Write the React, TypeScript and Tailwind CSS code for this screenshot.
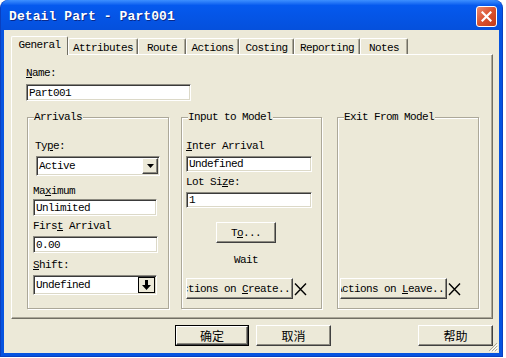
import type React from "react";

const txt = "font-['Liberation_Mono',monospace] text-[11px] tracking-[-0.6px] leading-[12px] text-black whitespace-nowrap";
const cjk = "font-['Noto_Sans_CJK_SC','Noto_Sans',sans-serif] text-[12px] leading-[14px] text-black";

// classic 3D borders
const sunken =
  "bg-white border border-t-[#8c8a80] border-l-[#8c8a80] border-b-white border-r-white shadow-[inset_1px_1px_0_#3a3a3a,inset_-1px_-1px_0_#dcd9c8]";
const raised =
  "bg-[#ece9d8] border border-t-white border-l-white border-b-[#404040] border-r-[#404040] shadow-[inset_-1px_-1px_0_#8c8a80]";
const etched =
  "border border-[#aca899] shadow-[inset_1px_1px_0_#ffffff,1px_1px_0_#ffffff]";

const tabs = [
  { name: "General", w: 57 },
  { name: "Attributes", w: 70 },
  { name: "Route", w: 48 },
  { name: "Actions", w: 53 },
  { name: "Costing", w: 55 },
  { name: "Reporting", w: 66 },
  { name: "Notes", w: 48 },
];

function Label({ children, className = "" }: { children: React.ReactNode; className?: string }) {
  return <div className={`${txt} h-[12px] ${className}`}>{children}</div>;
}

function Field({ value, className = "" }: { value: string; className?: string }) {
  return (
    <div className={`${sunken} flex items-center pl-[2px] ${className}`}>
      <span className={txt}>{value}</span>
    </div>
  );
}

function Group({ title, className = "", children }: { title: string; className?: string; children?: React.ReactNode }) {
  return (
    <div className={`relative ${etched} flex flex-col ${className}`}>
      <span className={`${txt} absolute -top-[7px] left-[6px] bg-[#ece9d8] pr-[1px]`}>{title}</span>
      {children}
    </div>
  );
}

function CrossMark() {
  return (
    <svg width="13" height="14" viewBox="0 0 13 14" className="ml-[1px]">
      <path d="M1 1.5 L12 13 M12 1.5 L1 13" stroke="#000" strokeWidth="1.4" fill="none" />
    </svg>
  );
}

export default function App() {
  return (
    <div className="w-[506px] h-[358px] bg-white relative overflow-hidden">
      {/* window */}
      <div className="w-[503px] h-[357px] flex flex-col rounded-t-[8px] bg-[#0553e0] border-x border-b border-[#0a3fbf]">
        {/* title bar */}
        <div className="h-[30px] flex items-start pl-[8px] pr-[5px] rounded-t-[8px] bg-gradient-to-b from-[#3d8fff] via-[#0559ee] via-[18%] to-[#0550dc]">
          <span className="font-['Liberation_Mono',monospace] font-bold text-[13px] leading-[16px] text-white mt-[9px] tracking-[0.1px] [text-shadow:1px_1px_0_#0a2a8a]">
            Detail Part - Part001
          </span>
          <div className="ml-auto mt-[6px] w-[21px] h-[21px] rounded-[3px] border border-white bg-gradient-to-br from-[#ec8a6e] via-[#d9512e] to-[#c23a17] flex items-center justify-center">
            <svg width="11" height="11" viewBox="0 0 11 11">
              <path d="M1.5 1.5 L9.5 9.5 M9.5 1.5 L1.5 9.5" stroke="#fff" strokeWidth="2.2" strokeLinecap="square" />
            </svg>
          </div>
        </div>

        {/* client area */}
        <div className="relative flex-1 mx-[3px] mb-[3px] bg-[#ece9d8] flex flex-col pt-[6px] pl-[7px]">
          {/* tabs */}
          <div className="flex items-end h-[18px] relative z-10">
            {tabs.map((t, i) =>
              i === 0 ? (
                <div
                  key={t.name}
                  style={{ width: t.w }}
                  className="h-[19px] -mb-[1px] bg-[#ece9d8] border-t border-l border-white border-r border-r-[#716f64] rounded-t-[2px] flex justify-center pt-[2px]"
                >
                  <span className={txt}>{t.name}</span>
                </div>
              ) : (
                <div
                  key={t.name}
                  style={{ width: t.w }}
                  className="h-[16px] border-t border-l border-white border-r border-r-[#716f64] shadow-[inset_-1px_0_0_#aca899] rounded-t-[2px] flex justify-center pt-[3px]"
                >
                  <span className={txt}>{t.name}</span>
                </div>
              )
            )}
          </div>

          {/* tab panel */}
          <div className="w-[482px] h-[265px] border-t border-l border-white border-r border-b border-r-[#716f64] border-b-[#716f64] shadow-[inset_-1px_-1px_0_#aca899] flex flex-col pl-[14px] pt-[12px]">
            <Label>
              <u>N</u>ame:
            </Label>
            <Field value="Part001" className="w-[165px] h-[17px] mt-[5px]" />

            <div className="flex mt-[16px]">
              {/* Arrivals */}
              <Group title="Arrivals" className="w-[142px] h-[192px] ml-[1px] pl-[5px]">
                <Label className="mt-[22px] ml-[2px]">
                  Ty<u>p</u>e:
                </Label>
                <div className={`${sunken} w-[124px] h-[20px] mt-[4px] ml-[3px] flex items-center pl-[2px] pr-[1px]`}>
                  <span className={txt}>Active</span>
                  <div className={`${raised} ml-auto w-[16px] h-[16px] flex items-center justify-center`}>
                    <svg width="7" height="4" viewBox="0 0 7 4">
                      <path d="M0 0 H7 L3.5 4 Z" fill="#000" />
                    </svg>
                  </div>
                </div>
                <Label className="mt-[9px]">
                  Ma<u>x</u>imum
                </Label>
                <Field value="Unlimited" className="w-[124px] h-[17px] mt-[2px]" />
                <Label className="mt-[4px]">
                  Firs<u>t</u> Arrival
                </Label>
                <Field value="0.00" className="w-[125px] h-[17px] mt-[4px]" />
                <Label className="mt-[6px]">
                  <u>S</u>hift:
                </Label>
                <div className={`${sunken} w-[124px] h-[20px] mt-[4px] flex items-center pl-[2px] pr-[1px]`}>
                  <span className={txt}>Undefined</span>
                  <div className="ml-auto w-[17px] h-[16px] border border-black bg-[#ece9d8] flex items-center justify-center">
                    <svg width="9" height="10" viewBox="0 0 9 10">
                      <path d="M3 0 H6 V5 H9 L4.5 10 L0 5 H3 Z" fill="#000" />
                    </svg>
                  </div>
                </div>
              </Group>

              {/* Input to Model */}
              <Group title="Input to Model" className="w-[141px] h-[192px] ml-[12px] pl-[4px] pb-[9px]">
                <Label className="mt-[22px]">
                  <u>I</u>nter Arrival
                </Label>
                <Field value="Undefined" className="w-[126px] h-[16px] mt-[4px]" />
                <Label className="mt-[4px]">
                  Lot Si<u>z</u>e:
                </Label>
                <Field value="1" className="w-[126px] h-[16px] mt-[4px]" />
                <div className={`${raised} w-[60px] h-[21px] mt-[14px] ml-[30px] flex items-center justify-center`}>
                  <span className={txt}>
                    T<u>o</u>...
                  </span>
                </div>
                <Label className="mt-[11px] ml-[48px]">Wait</Label>
                <div className="mt-auto flex items-center">
                  <div className={`${raised} w-[107px] h-[21px] overflow-hidden flex items-center justify-end pr-[2px]`}>
                    <span className={txt}>
                      Actions on <u>C</u>reate..
                    </span>
                  </div>
                  <CrossMark />
                </div>
              </Group>

              {/* Exit From Model */}
              <Group title="Exit From Model" className="w-[142px] h-[192px] ml-[15px] pl-[2px] pb-[9px]">
                <div className="mt-auto flex items-center">
                  <div className={`${raised} w-[107px] h-[21px] overflow-hidden flex items-center justify-end pr-[2px]`}>
                    <span className={txt}>
                      Actions on <u>L</u>eave..
                    </span>
                  </div>
                  <CrossMark />
                </div>
              </Group>
            </div>
          </div>

          {/* dialog buttons */}
          <div className="flex mt-[6px]">
            <div className="ml-[164px] w-[74px] h-[21px] border border-black">
              <div className={`${raised} w-full h-full flex items-center justify-center`}>
                <span className={cjk}>确定</span>
              </div>
            </div>
            <div className={`${raised} ml-[7px] w-[75px] h-[21px] flex items-center justify-center`}>
              <span className={cjk}>取消</span>
            </div>
            <div className={`${raised} ml-[87px] w-[75px] h-[21px] flex items-center justify-center`}>
              <span className={cjk}>帮助</span>
            </div>
          </div>

          {/* resize grip */}
          <svg width="11" height="11" viewBox="0 0 11 11" className="absolute right-[1px] bottom-[1px]">
            <path d="M10 2 L2 10 M10 5 L5 10 M10 8 L8 10" stroke="#aca899" strokeWidth="1" />
            <path d="M11 3 L3 11 M11 6 L6 11 M11 9 L9 11" stroke="#ffffff" strokeWidth="1" />
          </svg>
        </div>
      </div>
    </div>
  );
}
